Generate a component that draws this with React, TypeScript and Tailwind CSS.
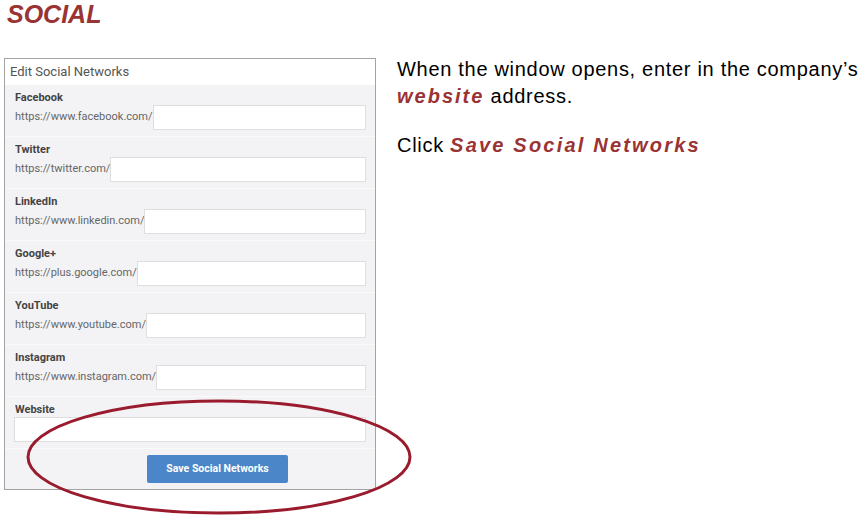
import React from "react";

const groups = [
  { label: "Facebook", prefix: "https://www.facebook.com/" },
  { label: "Twitter", prefix: "https://twitter.com/" },
  { label: "LinkedIn", prefix: "https://www.linkedin.com/" },
  { label: "Google+", prefix: "https://plus.google.com/" },
  { label: "YouTube", prefix: "https://www.youtube.com/" },
  { label: "Instagram", prefix: "https://www.instagram.com/" },
  { label: "Website", prefix: "" },
];

export default function App() {
  return (
    <div className="relative w-[864px] h-[522px] bg-white overflow-hidden font-['Liberation_Sans',Arial,sans-serif]">
      <div className="pl-[7px] pt-0 h-[58px]">
        <h1 className="text-[25px] leading-[28px] font-bold italic text-[#9a3333]">SOCIAL</h1>
      </div>
      <div className="flex items-start">
        <div className="ml-[4px] w-[372px] border border-[#a3a3a3] bg-[#f3f3f5] font-['Roboto',sans-serif]">
          <div className="h-[26px] bg-white pl-[5px] flex items-center text-[13px] text-[#555]">
            Edit Social Networks
          </div>
          {groups.map((g) => (
            <div
              key={g.label}
              className="h-[52px] pt-[6px] pl-[10px] pr-[9px] border-b border-[#fafafa]"
            >
              <div className="h-[14px] leading-[14px] text-[11px] font-bold text-[#444]">{g.label}</div>
              <div className="flex items-center h-[25px]">
                {g.prefix && (
                  <span className="text-[11px] text-[#666] whitespace-nowrap">{g.prefix}</span>
                )}
                <div className={`flex-1 h-[25px] bg-white border border-[#dedede] ${g.prefix ? "" : "-ml-[1px]"}`} />
              </div>
            </div>
          ))}
          <div className="h-[40px] pt-[6px] pl-[142px]">
            <div className="w-[141px] h-[28px] bg-[#4a86c8] rounded-[2px] flex items-center justify-center text-white text-[10.5px] font-bold">
              Save Social Networks
            </div>
          </div>
        </div>
        <div className="ml-[21px] -mt-[2px] text-[20px] tracking-[0.7px] text-black">
          <p className="leading-[27px] whitespace-nowrap">
            When the window opens, enter in the company’s
            <br />
            <span className="font-bold italic text-[#9a3333] tracking-[2px]">website</span> address.
          </p>
          <p className="leading-[27px] mt-[22px] whitespace-nowrap">
            Click <span className="font-bold italic text-[#9a3333] tracking-[2.2px]">Save Social Networks</span>
          </p>
        </div>
      </div>
      <svg
        className="absolute left-[25px] top-[398px]"
        width="390"
        height="118"
        viewBox="0 0 390 118"
      >
        <ellipse cx="194" cy="59" rx="191" ry="56" fill="none" stroke="#9a1b2d" strokeWidth="3" />
      </svg>
    </div>
  );
}
